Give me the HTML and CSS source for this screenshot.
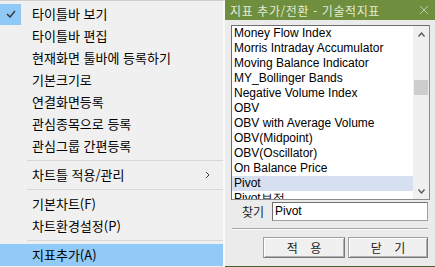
FILE: index.html
```html
<!DOCTYPE html>
<html lang="ko">
<head>
<meta charset="UTF-8">
<title>지표 추가/전환</title>
<link rel="stylesheet" href="styles.css">
</head>
<body>
<div class="screen">
    <div class="menu">
        <div class="item">
            <span class="icon checked">
                <svg width="10" height="8" viewBox="0 0 10 8"><path d="M1 4 L4 7 L9 1" fill="none" stroke="#333" stroke-width="1.4"/></svg>
            </span>
            <span class="label">타이틀바 보기</span>
        </div>
        <div class="item"><span class="icon"></span><span class="label">타이틀바 편집</span></div>
        <div class="item"><span class="icon"></span><span class="label">현재화면 툴바에 등록하기</span></div>
        <div class="item"><span class="icon"></span><span class="label">기본크기로</span></div>
        <div class="item"><span class="icon"></span><span class="label">연결화면등록</span></div>
        <div class="item"><span class="icon"></span><span class="label">관심종목으로 등록</span></div>
        <div class="item"><span class="icon"></span><span class="label">관심그룹 간편등록</span></div>
        <div class="sep"></div>
        <div class="item">
            <span class="icon"></span><span class="label">차트틀 적용/관리</span>
            <span class="sub"><svg width="5" height="8" viewBox="0 0 5 8"><path d="M1 1 L4 4 L1 7" fill="none" stroke="#444" stroke-width="1"/></svg></span>
        </div>
        <div class="sep"></div>
        <div class="item"><span class="icon"></span><span class="label">기본차트(F)</span></div>
        <div class="item"><span class="icon"></span><span class="label">차트환경설정(P)</span></div>
        <div class="sep"></div>
        <div class="item active"><span class="icon"></span><span class="label">지표추가(A)</span></div>
    </div>

    <div class="dialog">
        <div class="titlebar">
            <span class="title">지표 추가/전환 - 기술적지표</span>
            <svg class="close" width="10" height="10" viewBox="0 0 10 10"><path d="M1 1 L9 9 M9 1 L1 9" stroke="#b9c9a3" stroke-width="1"/></svg>
        </div>
        <div class="content">
            <div class="listbox">
                <ul class="list">
                    <li>Money Flow Index</li>
                    <li>Morris Intraday Accumulator</li>
                    <li>Moving Balance Indicator</li>
                    <li>MY_Bollinger Bands</li>
                    <li>Negative Volume Index</li>
                    <li>OBV</li>
                    <li>OBV with Average Volume</li>
                    <li>OBV(Midpoint)</li>
                    <li>OBV(Oscillator)</li>
                    <li>On Balance Price</li>
                    <li class="selected">Pivot</li>
                    <li class="partial">Pivot보정</li>
                </ul>
                <div class="scrollbar">
                    <div class="arrow"><svg width="7" height="5" viewBox="0 0 7 5"><path d="M0.5 4.5 L3.5 1 L6.5 4.5" fill="none" stroke="#555" stroke-width="1.3"/></svg></div>
                    <div class="track"><div class="thumb"></div></div>
                    <div class="arrow"><svg width="7" height="5" viewBox="0 0 7 5"><path d="M0.5 0.5 L3.5 4 L6.5 0.5" fill="none" stroke="#555" stroke-width="1.3"/></svg></div>
                </div>
            </div>

            <div class="search">
                <span class="search-label">찾기</span>
                <div class="input">Pivot</div>
            </div>

            <div class="rule"></div>

            <div class="buttons">
                <button class="btn apply">적 용</button>
                <button class="btn close-btn">닫 기</button>
            </div>
        </div>
    </div>
</div>
</body>
</html>
```

FILE: styles.css
```css
html, body {
    margin: 0;
    padding: 0;
}
body {
    width: 435px;
    height: 267px;
    overflow: hidden;
    background: #f0f0f0;
    font-family: "Noto Sans CJK KR", "Liberation Sans", sans-serif;
}
.screen {
    display: flex;
    height: 267px;
}

/* context menu */
.menu {
    width: 223px;
    height: 264px;
    background: #f0f0f0;
    border-top: 1px solid #cfcfcf;
    border-right: 2px solid #f9f9f9;
    padding-top: 2px;
}
.item {
    display: flex;
    align-items: center;
    height: 22px;
    font-size: 13px;
    color: #000;
}
.item.active {
    background: #91c9f7;
}
.icon {
    width: 21px;
    height: 21px;
    display: flex;
    align-items: center;
    justify-content: center;
}
.icon.checked {
    background: #90c8f6;
}
.label {
    margin-left: 11px;
    flex: 1;
    line-height: 22px;
}
.sub {
    width: 18px;
    display: flex;
    align-items: center;
}
.sep {
    height: 1px;
    margin: 3px 0 3px 27px;
    background: #d7d7d7;
}

/* dialog */
.dialog {
    flex: 1;
    display: flex;
    flex-direction: column;
    background: #ebebeb;
    border-bottom: 1px solid #4c6128;
}
.titlebar {
    height: 20px;
    background: #6f8e3e;
    display: flex;
    align-items: center;
    justify-content: space-between;
    padding: 0 6px 0 5px;
}
.title {
    color: #e4ecd8;
    font-size: 12px;
    letter-spacing: 0.6px;
}
.content {
    padding: 5px 5px 0 6px;
}
.listbox {
    display: flex;
    height: 173px;
    overflow: hidden;
    background: #fff;
    border: 1px solid #8a8a8a;
    border-top-color: #6e6e6e;
    border-left-color: #6e6e6e;
}
.list {
    flex: 1;
    margin: 0;
    padding: 0;
    list-style: none;
    overflow: hidden;
    font-family: "Liberation Sans", Arial, sans-serif;
    font-size: 12px;
    color: #000;
}
.list li {
    height: 15px;
    line-height: 15px;
    padding-left: 2px;
    white-space: nowrap;
}
.list li.selected {
    background: #d7e0f1;
}
.list li.partial {
    height: 8px;
    overflow: hidden;
}
.scrollbar {
    width: 16px;
    background: #f0f0f0;
    display: flex;
    flex-direction: column;
}
.arrow {
    height: 16px;
    display: flex;
    align-items: center;
    justify-content: center;
}
.track {
    flex: 1;
    padding: 38px 1px 0 1px;
}
.thumb {
    height: 15px;
    background: #cdcdcd;
}

.search {
    display: flex;
    align-items: center;
    margin-top: 2px;
    padding-left: 11px;
}
.search-label {
    width: 30px;
    font-size: 12px;
    color: #222;
}
.input {
    width: 152px;
    height: 17px;
    line-height: 17px;
    padding-left: 2px;
    background: #fff;
    border: 1px solid #a0a0a0;
    border-top-color: #707070;
    border-left-color: #707070;
    font-family: "Liberation Sans", Arial, sans-serif;
    font-size: 12px;
}

.rule {
    height: 1px;
    margin: 7px 2px 0 1px;
    background: #a6a6a6;
    border-bottom: 1px solid #fbfbfb;
}

.buttons {
    display: flex;
    justify-content: flex-end;
    gap: 3px;
    margin-top: 7px;
    padding-right: 2px;
}
.btn {
    height: 21px;
    padding: 0;
    background: #f0f0f0;
    border: 1px solid #7a7a7a;
    border-top-color: #a0a0a0;
    border-left-color: #a0a0a0;
    box-shadow: inset 1px 1px #ffffff, inset -1px -1px #b0b0b0;
    font-family: "Noto Sans CJK KR", sans-serif;
    font-size: 12px;
    word-spacing: 9px;
    color: #222;
}
.apply {
    width: 82px;
}
.close-btn {
    width: 80px;
}
```
